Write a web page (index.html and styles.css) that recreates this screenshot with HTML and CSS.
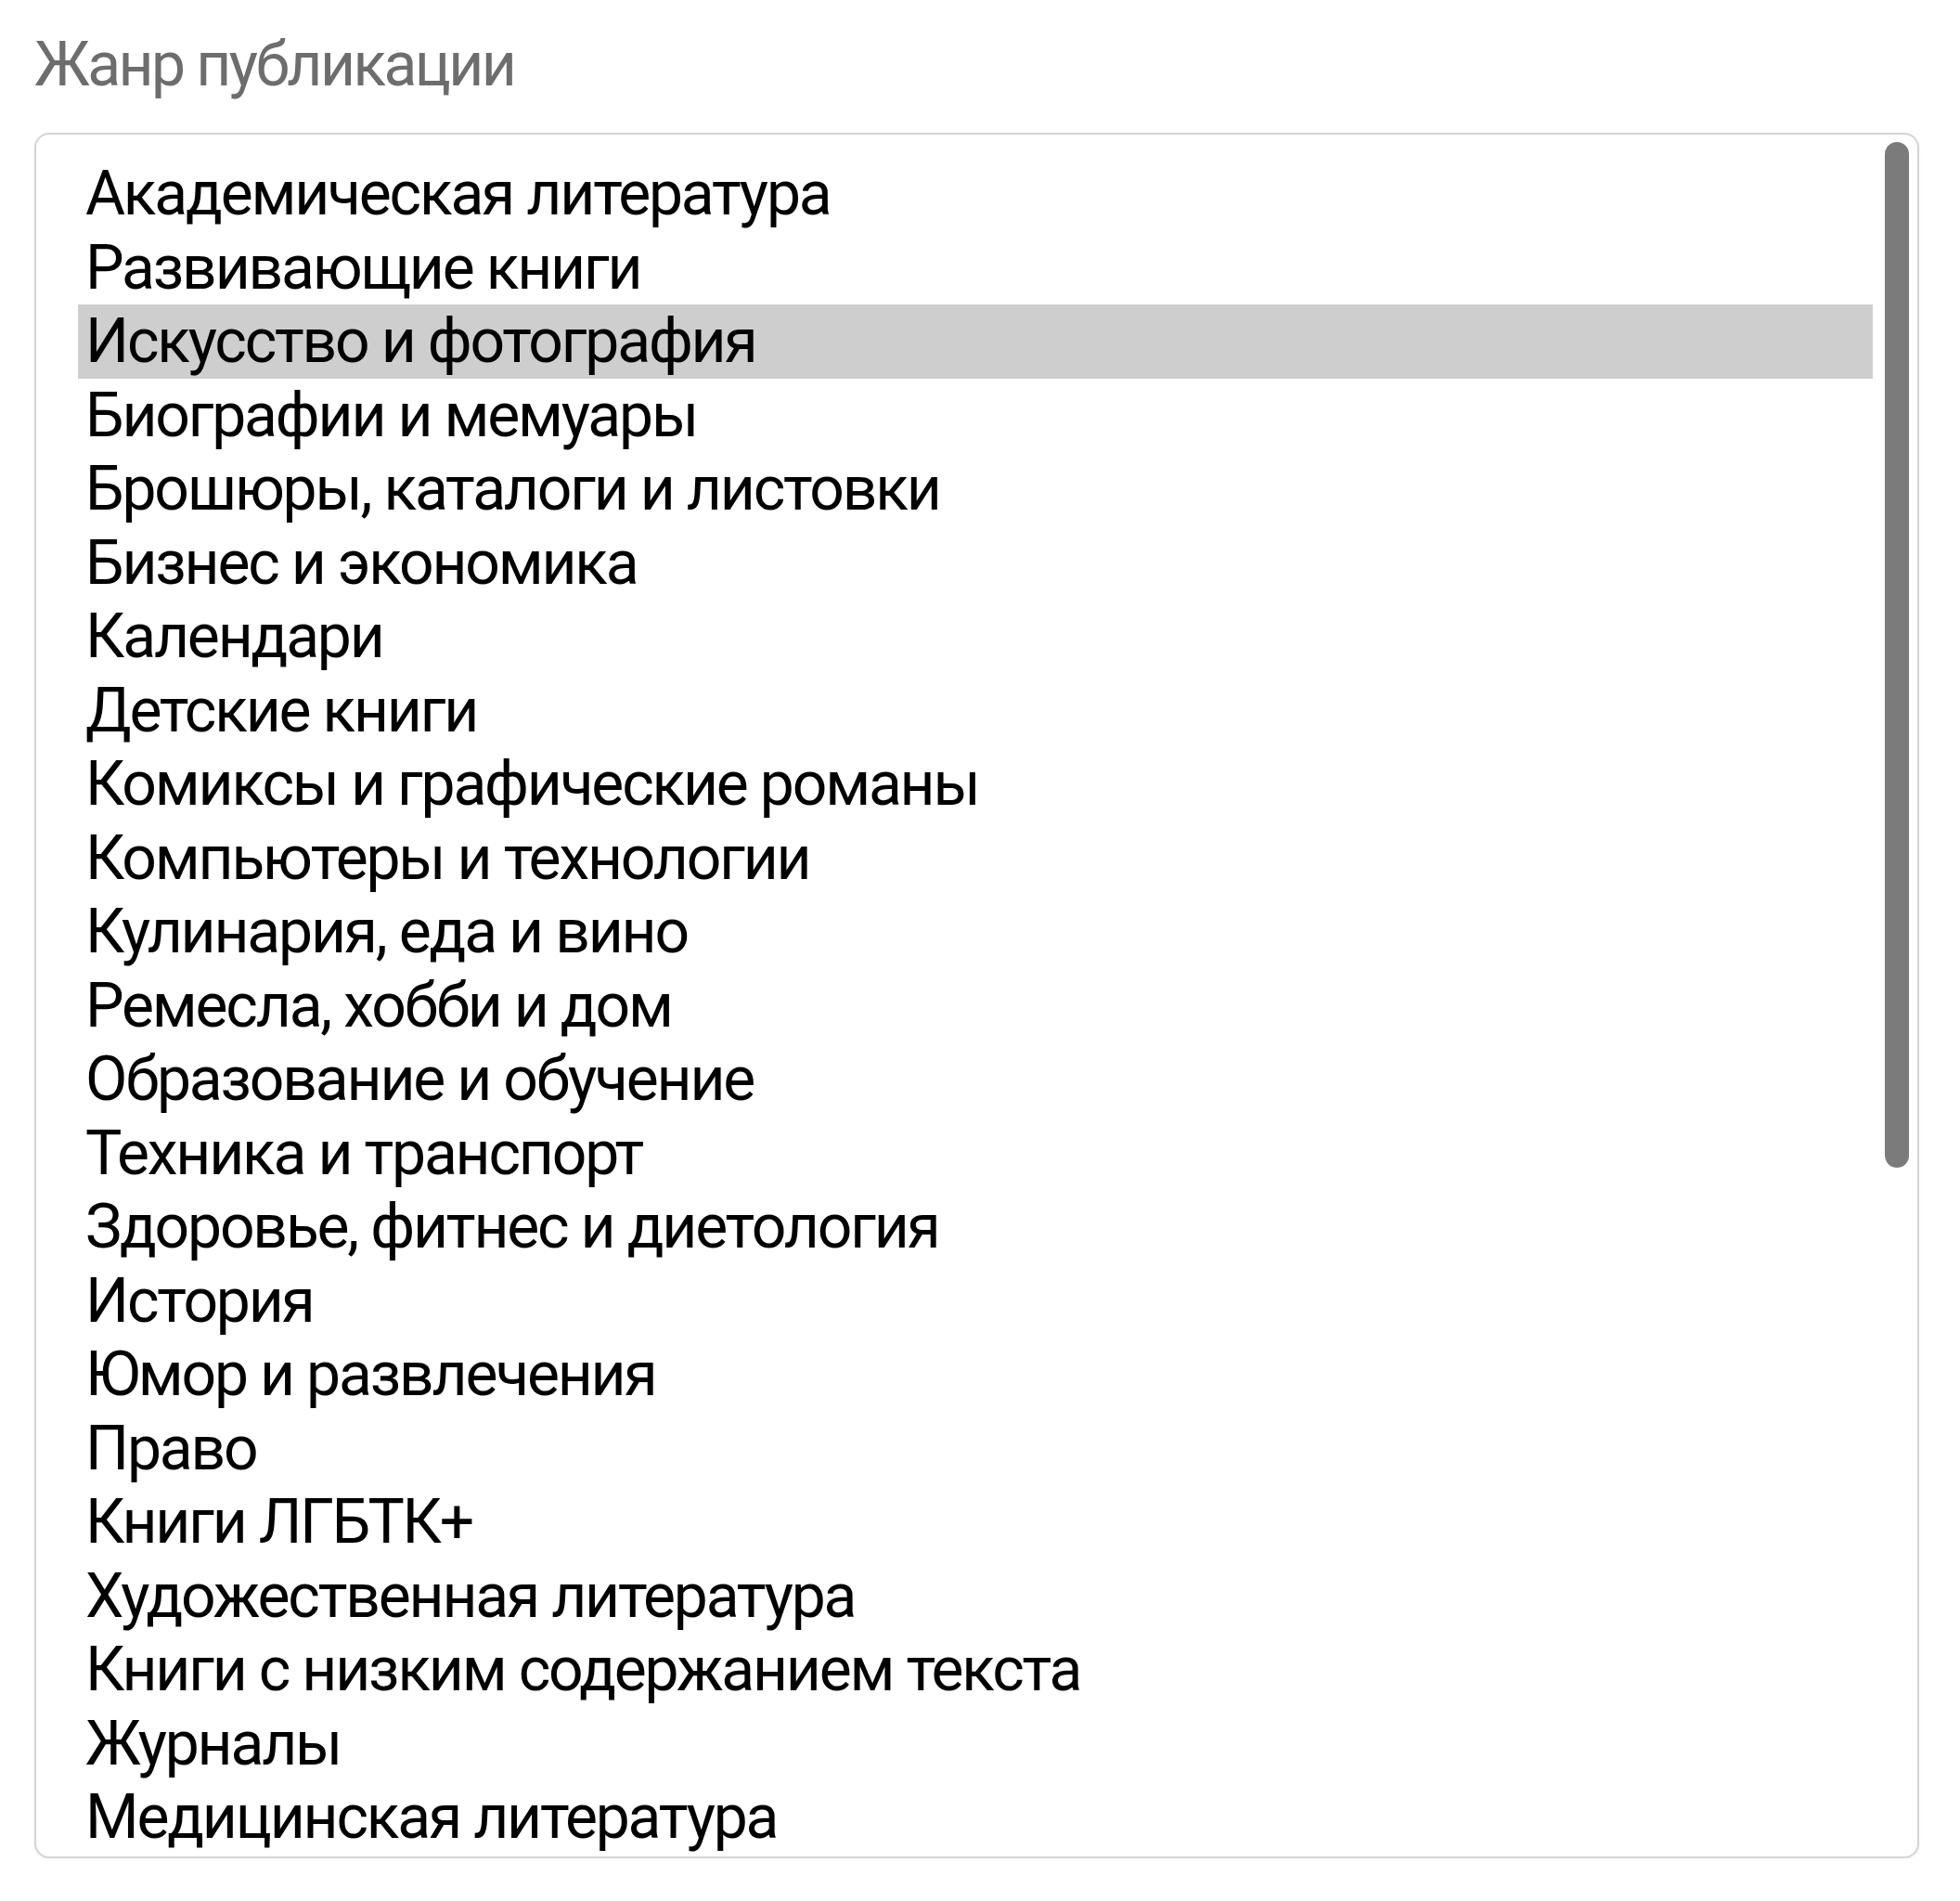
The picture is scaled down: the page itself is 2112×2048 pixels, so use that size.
FILE: index.html
```html
<!DOCTYPE html>
<html lang="ru">
<head>
<meta charset="utf-8">
<title>Жанр публикации</title>
<link rel="stylesheet" href="styles.css">
</head>
<body>
<div class="field">
  <div class="label">Жанр публикации</div>
  <div class="listbox">
    <ul class="options">
      <li class="option">Академическая литература</li>
      <li class="option">Развивающие книги</li>
      <li class="option selected">Искусство и фотография</li>
      <li class="option">Биографии и мемуары</li>
      <li class="option">Брошюры, каталоги и листовки</li>
      <li class="option">Бизнес и экономика</li>
      <li class="option">Календари</li>
      <li class="option">Детские книги</li>
      <li class="option">Комиксы и графические романы</li>
      <li class="option">Компьютеры и технологии</li>
      <li class="option">Кулинария, еда и вино</li>
      <li class="option">Ремесла, хобби и дом</li>
      <li class="option">Образование и обучение</li>
      <li class="option">Техника и транспорт</li>
      <li class="option">Здоровье, фитнес и диетология</li>
      <li class="option">История</li>
      <li class="option">Юмор и развлечения</li>
      <li class="option">Право</li>
      <li class="option">Книги ЛГБТК+</li>
      <li class="option">Художественная литература</li>
      <li class="option">Книги с низким содержанием текста</li>
      <li class="option">Журналы</li>
      <li class="option">Медицинская литература</li>
    </ul>
    <div class="thumb"></div>
  </div>
</div>
</body>
</html>
```
FILE: styles.css
```css
html, body {
  margin: 0;
  padding: 0;
  background: #ffffff;
}

body {
  font-family: Roboto, "Noto Sans", "Liberation Sans", sans-serif;
}

.field {
  padding: 30px 44px 0 37px;
  display: flex;
  flex-direction: column;
}

.label {
  font-size: 66px;
  line-height: 79.5px;
  letter-spacing: -2.6px;
  color: #6d6d6d;
  margin-bottom: 33.5px;
}

.listbox {
  position: relative;
  height: 1855px;
  border: 2px solid #d4d4d4;
  border-radius: 16px;
  box-shadow: 0 1px 3px rgba(0, 0, 0, 0.06);
  overflow: hidden;
  background: #ffffff;
}

.options {
  list-style: none;
  margin: 0;
  padding: 24px 48px 0 45px;
}

.option {
  font-size: 66px;
  line-height: 79.5px;
  letter-spacing: -2.2px;
  color: #000000;
  padding-left: 8px;
  white-space: nowrap;
}

.option.selected {
  background: #cecece;
}

.thumb {
  position: absolute;
  top: 8px;
  right: 9px;
  width: 26px;
  height: 1105px;
  border-radius: 13px;
  background: #7b7b7b;
}
```
